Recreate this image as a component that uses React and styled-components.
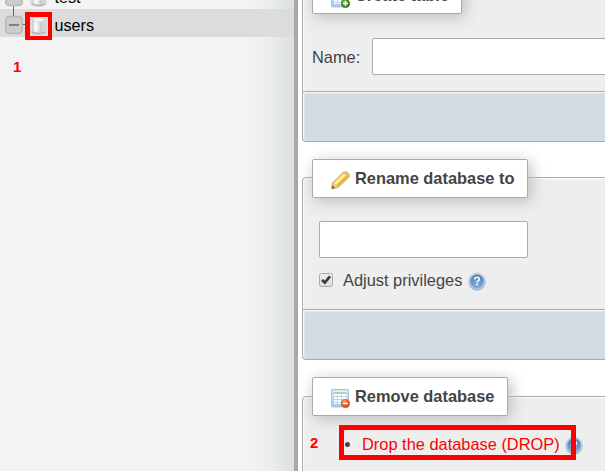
import React from "react";
import styled, { createGlobalStyle } from "styled-components";

const GlobalStyle = createGlobalStyle`
  * { box-sizing: border-box; }
  body { margin: 0; background: #fff; overflow: hidden; }
`;

const Page = styled.div`
  position: relative;
  display: flex;
  width: 605px;
  height: 471px;
  overflow: hidden;
  font: 16.4px/20px "Liberation Sans", Arial, sans-serif;
  color: #444;
`;

const Sidebar = styled.aside`
  display: flex;
  flex-direction: column;
  flex: none;
  width: 294px;
  background: linear-gradient(to right, #f3f3f3 248px, #eceeee 270px, #dadfe2 294px);
`;

const TreeRow = styled.div`
  display: flex;
  align-items: center;
  flex: none;
  height: 28px;
  margin-top: ${(p) => p.$offset || 0}px;
  padding-left: 5px;
  color: #000;
  background: ${(p) =>
    p.$active ? "linear-gradient(to right, #dcdcdc 284px, #d9dcde 294px)" : "transparent"};
`;

const TreeLabel = styled.span`
  margin: 4px 0 0 7.5px;
  font-size: 16.2px;
  line-height: 20px;
`;

const Divider = styled.div`
  flex: none;
  width: 4px;
  background: #a8a8a8;
`;

const Main = styled.main`
  display: flex;
  flex-direction: column;
  flex: none;
  width: 330px;
  padding-left: 4px;
`;

const Panel = styled.section`
  flex: none;
  height: ${(p) => p.$height}px;
  margin-top: ${(p) => p.$gap}px;
  padding: 0 10px;
  border: 1px solid #aaa;
  border-radius: 4px 4px 0 0;
  background: #eee;
  box-shadow: 1px 1px 2px #fff inset;
`;

const PanelFooter = styled.footer`
  flex: none;
  height: 50px;
  border: 1px solid #aaa;
  border-top: 0;
  border-radius: 0 0 4px 4px;
  background: #d3dce3;
  box-shadow: 1px 1px 2px #fff inset;
`;

const Legend = styled.h2`
  display: flex;
  align-items: center;
  width: ${(p) => p.$width}px;
  height: 39px;
  margin: ${(p) => -(p.$rise || 19)}px 0 0 -1px;
  padding: ${(p) => p.$inset || 0}px 0 0 18px;
  border: 1px solid #aaa;
  border-radius: 2px;
  background: #fff;
  box-shadow: 3px 3px 15px #bbb;
  font-size: 16.4px;
  line-height: 20px;
  white-space: nowrap;
`;

const LegendText = styled.span`
  margin: 0 0 2px 5px;
`;

const Field = styled.label`
  display: flex;
  align-items: center;
  gap: 12px;
  margin: 24px 0 0 -1px;
`;

const TextInput = styled.input`
  display: block;
  flex: none;
  width: ${(p) => p.$width}px;
  height: 37px;
  margin: 0;
  border: 1px solid #aaa;
  border-radius: 2px;
  background: #fff;
  outline: 0;
`;

const RenameBody = styled.div`
  display: flex;
  flex-direction: column;
  padding: 23px 0 0 6px;
`;

const CheckLine = styled.div`
  display: flex;
  align-items: center;
  margin-top: 12px;
  height: 20px;
  white-space: nowrap;
`;

const CheckLabel = styled.span`
  margin: 0 6px 0 10px;
`;

const DropList = styled.ul`
  display: flex;
  margin: 18px 0 0;
  padding: 0 0 0 32px;
  list-style: none;
`;

const DropItem = styled.li`
  display: flex;
  align-items: center;
  height: 20px;
  white-space: nowrap;
`;

const Bullet = styled.i`
  width: 5px;
  height: 5px;
  margin-right: 12px;
  border-radius: 50%;
  background: #444;
`;

const DropLink = styled.a`
  margin-right: 5px;
  color: #f00;
`;

const Highlight = styled.div`
  position: absolute;
  left: ${(p) => p.$x}px;
  top: ${(p) => p.$y}px;
  width: ${(p) => p.$w}px;
  height: ${(p) => p.$h}px;
  border: 5px solid #f00;
  border-right-width: ${(p) => p.$edge || 5}px;
  border-bottom-width: ${(p) => p.$edge || 5}px;
`;

const StepNumber = styled.b`
  position: absolute;
  left: ${(p) => p.$x}px;
  top: ${(p) => p.$y}px;
  color: #f00;
  font: bold 15px/16px "Liberation Sans", Arial, sans-serif;
`;

const Icon = styled.svg`
  display: block;
  flex: none;
  position: relative;
  top: ${(p) => p.$shift || 0}px;
`;

const TreeIcon = ({ last }) => (
  <Icon width="25" height="28" viewBox="0 0 25 28">
    <path d={last ? "M8.5 0V7M18 15.5H25" : "M8.5 0V28M18 15.5H25"} stroke="#666" />
    <rect x=".75" y="7.5" width="16.5" height="17" rx="3.5" fill="#cdcdcd" stroke="#b7b7b7" strokeWidth="1.5" />
    <path d="M4 16H14" stroke="#808080" strokeWidth="2" />
  </Icon>
);

const DatabaseIcon = () => (
  <Icon $shift={3} width="17" height="18" viewBox="0 0 17 18">
    <defs>
      <linearGradient id="cyl">
        <stop offset="0" stopColor="#d2d2d2" />
        <stop offset=".25" stopColor="#fff" />
        <stop offset=".5" stopColor="#e4e4e4" />
        <stop offset=".7" stopColor="#c9c9c9" />
        <stop offset="1" stopColor="#dedede" />
      </linearGradient>
    </defs>
    <path d="M.8 1.5V14Q2 17.3 8.5 17.3T16.2 14V1.5Z" fill="#e2e2e2" stroke="#c9c9c9" strokeWidth=".7" />
    <path d="M2.7 3V13.5C3 16 14 16 14.3 13.5V3Z" fill="url(#cyl)" stroke="#c2c2c2" strokeWidth=".6" />
    <ellipse cx="8.5" cy="2.8" rx="6" ry="2.1" fill="#f3f3f3" stroke="#d0d0d0" strokeWidth=".7" />
    <path d="M1.5 14.8Q8.5 18.3 15.5 14.8" fill="none" stroke="#aaa" />
  </Icon>
);

const TableIcon = ({ remove }) => (
  <Icon $shift={2} width="19" height="19" viewBox="0 0 19 19">
    <defs>
      <linearGradient id="tbl" x2="0" y2="1">
        <stop stopColor="#d4e3f6" />
        <stop offset="1" stopColor="#a9c5ed" />
      </linearGradient>
      <radialGradient id={remove ? "minus" : "plus"} cx=".4" cy=".3">
        <stop stopColor={remove ? "#ffa45e" : "#8bc75d"} />
        <stop offset="1" stopColor={remove ? "#d75316" : "#397d20"} />
      </radialGradient>
    </defs>
    <rect x=".5" y=".5" width="17" height="17.5" rx="1" fill="url(#tbl)" stroke="#a7c2e7" />
    <path d="M3 2.5H15.5V15H3Z" fill="#fff" />
    <path d="M3 4H15.5" stroke="#8ccb75" strokeWidth="1.5" />
    <path d="M3 7.5H15.5M3 10.5H15.5M3 13.5H15.5M6.5 6V15M10.5 6V15" stroke="#b9cfeb" />
    <circle cx="14.5" cy="14.5" r="4.1" fill={`url(#${remove ? "minus" : "plus"})`} stroke={remove ? "#c95a29" : "#438229"} strokeWidth=".7" />
    <path d={remove ? "M12 14.5H17" : "M12 14.5H17M14.5 12V17"} stroke="#fff" strokeWidth="1.5" />
  </Icon>
);

const PencilIcon = () => (
  <Icon $shift={2} width="19" height="19" viewBox="0 0 19 19">
    <path d="M.8 17.8L1.5 12L12.5 1.3Q15.8-.5 18.2 3.3Q18.9 5.3 17.4 6.8L6.7 16.5Z" fill="#f2c846" stroke="#d39c5c" />
    <path d="M3 12L12.8 2.6L14.6 4.6L5 13.9Z" fill="#fff09a" />
    <path d="M5.9 14.9L16 5.4" stroke="#e5aa35" strokeWidth="1.2" />
    <path d="M12.5 1.8Q15.3 0 17.7 3.5Q18.2 5 16.9 6.6Q15.7 3.5 12.5 1.8Z" fill="#ecbc86" />
    <path d="M2 12.5Q5.7 12.5 6.3 16.3L1 17.7Z" fill="#efc99a" />
    <path d="M.8 18L1.3 14.3L4.3 16.9Z" fill="#80603d" />
  </Icon>
);

const HelpIcon = () => (
  <Icon $shift={1.5} width="18" height="19" viewBox="0 0 18 19">
    <defs>
      <linearGradient id="ring" x2="0" y2="1">
        <stop stopColor="#d3dae2" />
        <stop offset="1" stopColor="#9fbbd9" />
      </linearGradient>
      <radialGradient id="help" cx=".5" cy=".75" r=".7">
        <stop stopColor="#85b3e3" />
        <stop offset="1" stopColor="#5080b7" />
      </radialGradient>
    </defs>
    <ellipse cx="9" cy="9.5" rx="8.9" ry="9.3" fill="url(#ring)" />
    <circle cx="9" cy="9" r="6.5" fill="url(#help)" stroke="#7fa1c7" strokeWidth=".8" />
    <path d="M6.6 7.3Q6.8 5.2 9 5.2Q11.3 5.2 11.3 7.2Q11.3 8.4 10 9Q9 9.5 9 10.5M9 11.7V13.4" fill="none" stroke="#f3f7fb" strokeWidth="1.6" />
  </Icon>
);

const CheckIcon = () => (
  <Icon width="14" height="14" viewBox="0 0 14 14">
    <defs>
      <linearGradient id="chk" x2="0" y2="1">
        <stop stopColor="#eee" />
        <stop offset="1" stopColor="#dcdcdc" />
      </linearGradient>
    </defs>
    <rect x=".5" y=".5" width="13" height="13" rx="2" fill="url(#chk)" stroke="#aaa" />
    <path d="M3 7L5.8 9.6L11 3.3" fill="none" stroke="#3c3c3c" strokeWidth="2.7" />
  </Icon>
);

export default function App() {
  return (
    <>
      <GlobalStyle />
      <Page>
        <Sidebar>
          <TreeRow $offset={-19}>
            <TreeIcon />
            <DatabaseIcon />
            <TreeLabel>test</TreeLabel>
          </TreeRow>
          <TreeRow $active>
            <TreeIcon last />
            <DatabaseIcon />
            <TreeLabel>users</TreeLabel>
          </TreeRow>
        </Sidebar>
        <Divider />
        <Main>
          <Panel $height={98} $gap={-6}>
            <Legend $width={150} $rise={20} $inset={3}>
              <TableIcon />
              <LegendText>Create table</LegendText>
            </Legend>
            <Field>
              Name:
              <TextInput $width={260} />
            </Field>
          </Panel>
          <PanelFooter />
          <Panel $height={133} $gap={35}>
            <Legend $width={216}>
              <PencilIcon />
              <LegendText>Rename database to</LegendText>
            </Legend>
            <RenameBody>
              <TextInput $width={209} />
              <CheckLine>
                <CheckIcon />
                <CheckLabel>Adjust privileges</CheckLabel>
                <HelpIcon />
              </CheckLine>
            </RenameBody>
          </Panel>
          <PanelFooter />
          <Panel $height={130} $gap={36}>
            <Legend $width={196} $rise={20}>
              <TableIcon remove />
              <LegendText>Remove database</LegendText>
            </Legend>
            <DropList>
              <DropItem>
                <Bullet />
                <DropLink>Drop the database (DROP)</DropLink>
                <HelpIcon />
              </DropItem>
            </DropList>
          </Panel>
        </Main>
        <Highlight $x={25} $y={12} $w={27} $h={28} $edge={4} />
        <Highlight $x={339} $y={425} $w={237} $h={35} />
        <StepNumber $x={13} $y={59}>1</StepNumber>
        <StepNumber $x={310} $y={435}>2</StepNumber>
      </Page>
    </>
  );
}
